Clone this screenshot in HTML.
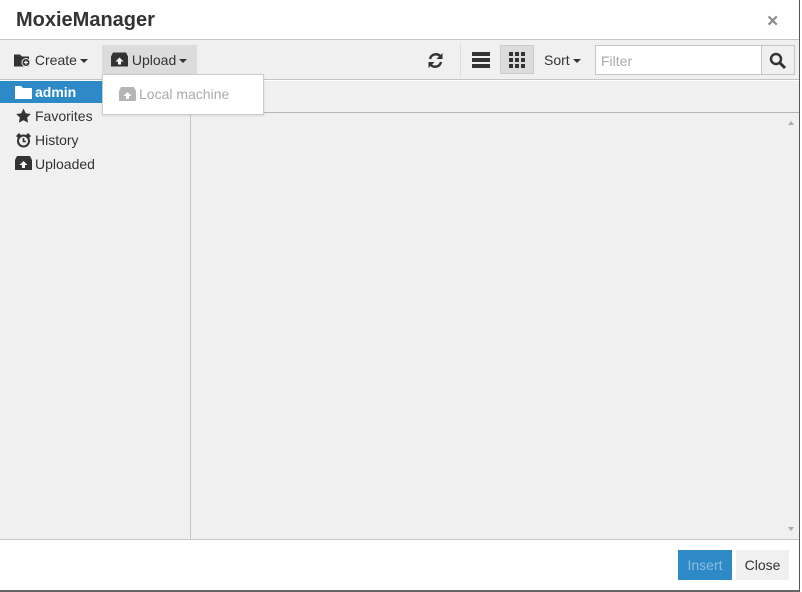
<!DOCTYPE html>
<html><head><meta charset="utf-8"><style>
*{box-sizing:border-box;margin:0;padding:0}
body{width:802px;height:592px;overflow:hidden;background:#fff;font-family:"Liberation Sans",Arial,sans-serif;font-size:14px;color:#333;position:relative}
.abs{position:absolute}
.title{left:0;top:0;width:800px;height:40px;background:#fff;border-bottom:1px solid #c5c5c5}
.title h1{position:absolute;left:16px;top:9px;font-size:20px;font-weight:bold;color:#333}
.x{right:21px;top:12px;font-size:15px;font-weight:bold;color:#888}
.tb{left:0;top:40px;width:800px;height:40px;background:#f0f0f0;border-bottom:1px solid #c5c5c5}
.btn{position:absolute;top:5px;height:29px;line-height:31px;font-size:14px;color:#333}
.caret{display:inline-block;width:0;height:0;border-left:4px solid transparent;border-right:4px solid transparent;border-top:4px solid #333;vertical-align:middle;margin-left:3px}
.side{left:0;top:81px;width:191px;height:458px;background:#f0f0f0;border-right:1px solid #c5c5c5}
.item{position:absolute;left:0;width:190px;height:22px;line-height:22px;font-size:14px;padding-left:35px}
.main{left:191px;top:81px;width:609px;height:458px;background:#f0f0f0}
.foot{left:0;top:539px;width:800px;height:53px;background:#fff;border-top:1px solid #c5c5c5}
</style></head><body>
<div class="abs" style="left:0;top:0;width:68px;height:2px;background:#999"></div>
<div class="abs" style="left:208px;top:0;width:6px;height:3px;background:#f00"></div>
<div class="abs" style="left:251px;top:0;width:3px;height:3px;background:#f00"></div>
<div class="abs" style="left:323px;top:0;width:3px;height:3px;background:#f00"></div>
<div class="abs" style="left:340px;top:0;width:3px;height:3px;background:#f00"></div>
<div class="abs title"><h1>MoxieManager</h1><div class="abs x">✕</div></div>
<div class="abs tb">
  <div class="btn" style="left:14px;width:80px">
    <svg width="17" height="15" viewBox="0 0 17 14" style="vertical-align:-2px"><path d="M0 2h6l2 2h7v10H0z" fill="#333"/><circle cx="12" cy="10" r="4" fill="#333" stroke="#f0f0f0" stroke-width="1"/><path d="M12 8v4M10 10h4" stroke="#f0f0f0" stroke-width="1.2"/></svg>
    Create<span class="caret"></span></div>
  <div class="btn" style="left:102px;width:95px;background:#dcdcdc;padding-left:9px">
    <svg width="17" height="15" viewBox="0 0 17 14" style="vertical-align:-2px"><path d="M2 0h13l2 4v10H0V4z" fill="#333"/><path d="M8.5 5l4 4h-2.5v3h-3V9H4.5z" fill="#fff"/></svg>
    Upload<span class="caret"></span></div>
  <svg class="abs" style="left:427px;top:12px" width="17" height="17" viewBox="0 0 17 17"><path d="M3 7a6 6 0 0 1 10.5-2.5" stroke="#333" stroke-width="2.4" fill="none"/><path d="M15.5 1v6h-6z" fill="#333"/><path d="M14 10a6 6 0 0 1-10.5 2.5" stroke="#333" stroke-width="2.4" fill="none"/><path d="M1.5 16v-6h6z" fill="#333"/></svg>
  <div class="abs" style="left:460px;top:4px;width:1px;height:32px;background:#dcdcdc"></div>
  <div class="abs" style="left:472px;top:12px;width:18px;height:4px;background:#333"></div>
  <div class="abs" style="left:472px;top:18px;width:18px;height:4px;background:#333"></div>
  <div class="abs" style="left:472px;top:24px;width:18px;height:4px;background:#333"></div>
  <div class="abs" style="left:500px;top:5px;width:34px;height:29px;background:#dcdcdc;border:1px solid #ccc"></div>
  <svg class="abs" style="left:509px;top:12px" width="16" height="16" viewBox="0 0 16 16" fill="#333"><rect x="0" y="0" width="4" height="4"/><rect x="6" y="0" width="4" height="4"/><rect x="12" y="0" width="4" height="4"/><rect x="0" y="6" width="4" height="4"/><rect x="6" y="6" width="4" height="4"/><rect x="12" y="6" width="4" height="4"/><rect x="0" y="12" width="4" height="4"/><rect x="6" y="12" width="4" height="4"/><rect x="12" y="12" width="4" height="4"/></svg>
  <div class="btn" style="left:544px">Sort<span class="caret"></span></div>
  <div class="abs" style="left:595px;top:5px;width:200px;height:30px;background:#fff;border:1px solid #c5c5c5"></div>
  <div class="abs" style="left:601px;top:13px;color:#aaa;font-size:14px">Filter</div>
  <div class="abs" style="left:761px;top:5px;width:34px;height:30px;background:#f0f0f0;border:1px solid #c5c5c5"></div>
  <svg class="abs" style="left:769px;top:12px" width="18" height="18" viewBox="0 0 18 18"><circle cx="7" cy="7" r="5" stroke="#333" stroke-width="2.4" fill="none"/><path d="M11 11l5 5" stroke="#333" stroke-width="3"/></svg>
</div>
<div class="abs side">
  <div class="item" style="top:0;background:#2d8ac7;color:#fff;font-weight:bold">admin</div>
  <svg class="abs" style="left:15px;top:4px" width="17" height="14" viewBox="0 0 17 14"><path d="M0 1h6l2 2h9v11H0z" fill="#fff"/></svg>
  <div class="item" style="top:24px">Favorites</div>
  <svg class="abs" style="left:15px;top:27px" width="17" height="16" viewBox="0 0 24 24"><path d="M12 1l3.4 7 7.6 1-5.5 5.3 1.3 7.7L12 18.3 5.2 22l1.3-7.7L1 9l7.6-1z" fill="#333"/></svg>
  <div class="item" style="top:48px">History</div>
  <svg class="abs" style="left:15px;top:51px" width="17" height="16" viewBox="0 0 17 16"><circle cx="8.5" cy="9" r="5.5" stroke="#333" stroke-width="2" fill="none"/><path d="M8.5 6v3.5h2.5" stroke="#333" stroke-width="1.6" fill="none"/><path d="M1 4l3-3 2 2-3 3zM16 4l-3-3-2 2 3 3z" fill="#333"/></svg>
  <div class="item" style="top:72px">Uploaded</div>
  <svg class="abs" style="left:15px;top:75px" width="17" height="14" viewBox="0 0 17 14"><path d="M2 0h13l2 4v10H0V4z" fill="#333"/><path d="M8.5 5l4 4h-2.5v3h-3V9H4.5z" fill="#fff"/></svg>
</div>
<div class="abs main">
  <div class="abs" style="left:0;top:31px;width:609px;height:1px;background:#b5b5b5"></div>
  <div class="abs" style="left:597px;top:40px;width:0;height:0;border-left:3px solid transparent;border-right:3px solid transparent;border-bottom:4px solid #aaa"></div>
  <div class="abs" style="left:597px;top:446px;width:0;height:0;border-left:3px solid transparent;border-right:3px solid transparent;border-top:4px solid #aaa"></div>
</div>
<div class="abs" style="left:102px;top:74px;width:162px;height:41px;background:#fff;border:1px solid #ccc;box-shadow:0 1px 2px rgba(0,0,0,.1)">
  <svg class="abs" style="left:16px;top:12px" width="17" height="14" viewBox="0 0 17 14"><path d="M2 0h13l2 4v10H0V4z" fill="#b5b5b5"/><path d="M8.5 5l4 4h-2.5v3h-3V9H4.5z" fill="#fff"/></svg>
  <div class="abs" style="left:36px;top:11px;color:#aaa;font-size:14px">Local machine</div>
</div>
<div class="abs foot">
  <div class="abs" style="left:678px;top:10px;width:54px;height:30px;background:#2d8ac7;color:#8dbde0;line-height:30px;text-align:center">Insert</div>
  <div class="abs" style="left:736px;top:10px;width:53px;height:30px;background:#f0f0f0;color:#333;line-height:30px;text-align:center">Close</div>
</div>
<div class="abs" style="left:799px;top:0;width:1px;height:592px;background:#555"></div>
<div class="abs" style="left:0;top:590px;width:800px;height:2px;background:#666"></div>
<div class="abs" style="left:800px;top:0;width:2px;height:592px;background:#fff"></div>
</body></html>
